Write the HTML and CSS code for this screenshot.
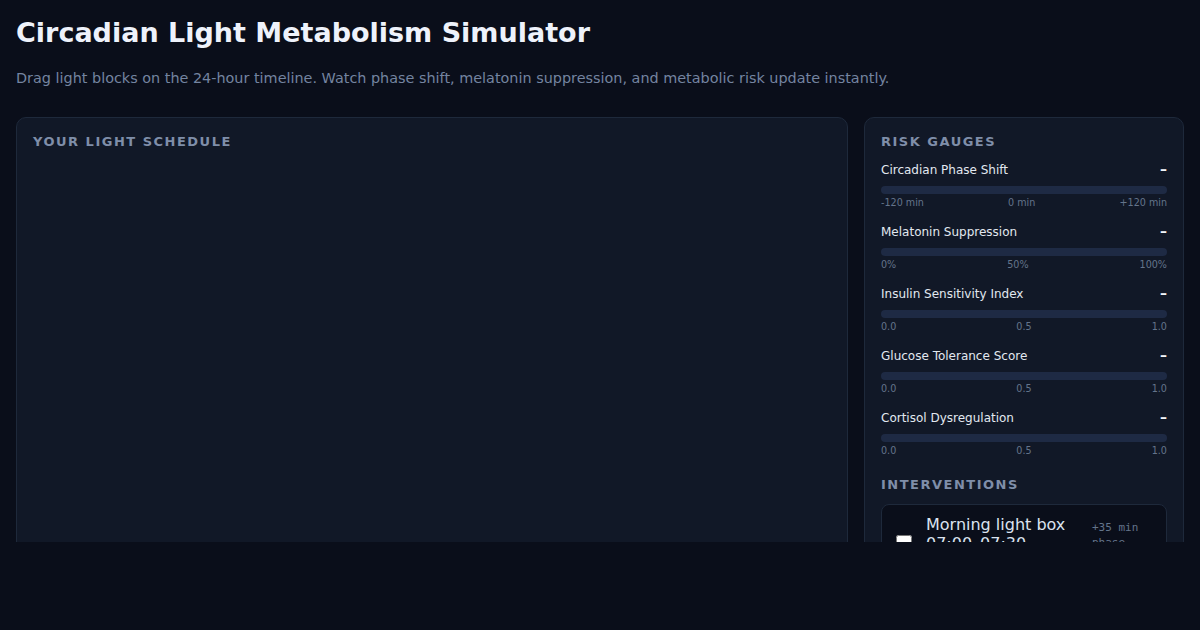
FILE: index.html
```html
<!DOCTYPE html>
<html lang="en">
<head>
    <meta charset="UTF-8">
    <meta name="viewport" content="width=device-width, initial-scale=1.0">
    <title>Circadian Light Metabolism Simulator</title>
    <link rel="stylesheet" href="styles.css">
</head>
<body>
    <header class="page-header">
        <h1>Circadian Light Metabolism Simulator</h1>
        <p class="subtitle">Drag light blocks on the 24-hour timeline. Watch phase shift, melatonin suppression, and metabolic risk update instantly.</p>
    </header>

    <main class="layout">
        <section class="panel schedule-panel">
            <h2 class="panel-title">Your Light Schedule</h2>
            <div class="timeline" id="timeline">
            </div>
        </section>

        <aside class="panel side-panel">
            <h2 class="panel-title">Risk Gauges</h2>

            <div class="gauge">
                <div class="gauge-head">
                    <span class="gauge-label">Circadian Phase Shift</span>
                    <span class="gauge-value">–</span>
                </div>
                <div class="gauge-bar"></div>
                <div class="gauge-scale">
                    <span>-120 min</span><span>0 min</span><span>+120 min</span>
                </div>
            </div>

            <div class="gauge">
                <div class="gauge-head">
                    <span class="gauge-label">Melatonin Suppression</span>
                    <span class="gauge-value">–</span>
                </div>
                <div class="gauge-bar"></div>
                <div class="gauge-scale">
                    <span>0%</span><span>50%</span><span>100%</span>
                </div>
            </div>

            <div class="gauge">
                <div class="gauge-head">
                    <span class="gauge-label">Insulin Sensitivity Index</span>
                    <span class="gauge-value">–</span>
                </div>
                <div class="gauge-bar"></div>
                <div class="gauge-scale">
                    <span>0.0</span><span>0.5</span><span>1.0</span>
                </div>
            </div>

            <div class="gauge">
                <div class="gauge-head">
                    <span class="gauge-label">Glucose Tolerance Score</span>
                    <span class="gauge-value">–</span>
                </div>
                <div class="gauge-bar"></div>
                <div class="gauge-scale">
                    <span>0.0</span><span>0.5</span><span>1.0</span>
                </div>
            </div>

            <div class="gauge">
                <div class="gauge-head">
                    <span class="gauge-label">Cortisol Dysregulation</span>
                    <span class="gauge-value">–</span>
                </div>
                <div class="gauge-bar"></div>
                <div class="gauge-scale">
                    <span>0.0</span><span>0.5</span><span>1.0</span>
                </div>
            </div>

            <h2 class="panel-title interventions-title">Interventions</h2>
            <label class="intervention">
                <input type="checkbox">
                <span class="intervention-info">
                    <span class="intervention-name">Morning light box 07:00–07:30</span>
                    <span class="intervention-desc">10,000 lux</span>
                </span>
                <span class="intervention-effect">+35 min phase advance</span>
            </label>
            <label class="intervention">
                <input type="checkbox">
                <span class="intervention-info">
                    <span class="intervention-name">Blue-blocking glasses 20:00–23:00</span>
                    <span class="intervention-desc">Amber lenses</span>
                </span>
                <span class="intervention-effect">-40% melatonin loss</span>
            </label>
        </aside>
    </main>
</body>
</html>
```

FILE: styles.css
```css
body {
    margin: 0;
    padding: 16px;
    background-color: #0a0e1a;
    color: #e2e8f0;
    font-family: "DejaVu Sans", Verdana, sans-serif;
}

.page-header h1 {
    margin: 0 0 20px;
    font-size: 27px;
    line-height: 1.25;
    color: #eef2fb;
}

.subtitle {
    margin: 0 0 31px;
    font-size: 14.4px;
    color: #7484a0;
}

.layout {
    display: grid;
    grid-template-columns: 1fr 320px;
    gap: 16px;
    height: 425px;
    overflow: hidden;
}

.panel {
    background-color: #111827;
    border: 1px solid #1e293b;
    border-radius: 10px;
    padding: 16px;
    min-height: 600px;
}

.panel-title {
    margin: 0 0 13px;
    font-size: 13px;
    line-height: 15px;
    letter-spacing: 1.5px;
    text-transform: uppercase;
    color: #7f8ea9;
}

.gauge {
    margin-bottom: 15px;
}

.gauge-head {
    display: flex;
    justify-content: space-between;
    align-items: baseline;
    font-size: 12px;
    line-height: 15px;
}

.gauge-value {
    font-size: 14px;
    font-weight: bold;
    color: #f1f5f9;
}

.gauge-bar {
    height: 8px;
    margin-top: 8px;
    border-radius: 4px;
    background-color: #1e2a44;
}

.gauge-scale {
    display: flex;
    justify-content: space-between;
    margin-top: 3px;
    font-size: 9.6px;
    line-height: 12px;
    color: #64748b;
}

.interventions-title {
    margin-top: 20px;
    margin-bottom: 12px;
}

.intervention {
    display: flex;
    align-items: center;
    gap: 14px;
    padding: 10px 14px;
    margin-bottom: 10px;
    background-color: #0a0e1a;
    border: 1px solid #1e293b;
    border-radius: 8px;
    cursor: pointer;
}

.intervention input {
    margin: 0;
    width: 16px;
    height: 16px;
    flex-shrink: 0;
}

.intervention-info {
    flex: 1;
    display: flex;
    flex-direction: column;
}

.intervention-name {
    font-size: 16px;
    line-height: 19px;
    color: #dbe3f0;
}

.intervention-desc {
    font-size: 12px;
    line-height: 18px;
    color: #64748b;
}

.intervention-effect {
    width: 60px;
    font-family: "DejaVu Sans Mono", monospace;
    font-size: 11px;
    line-height: 15px;
    color: #64748b;
}
```
